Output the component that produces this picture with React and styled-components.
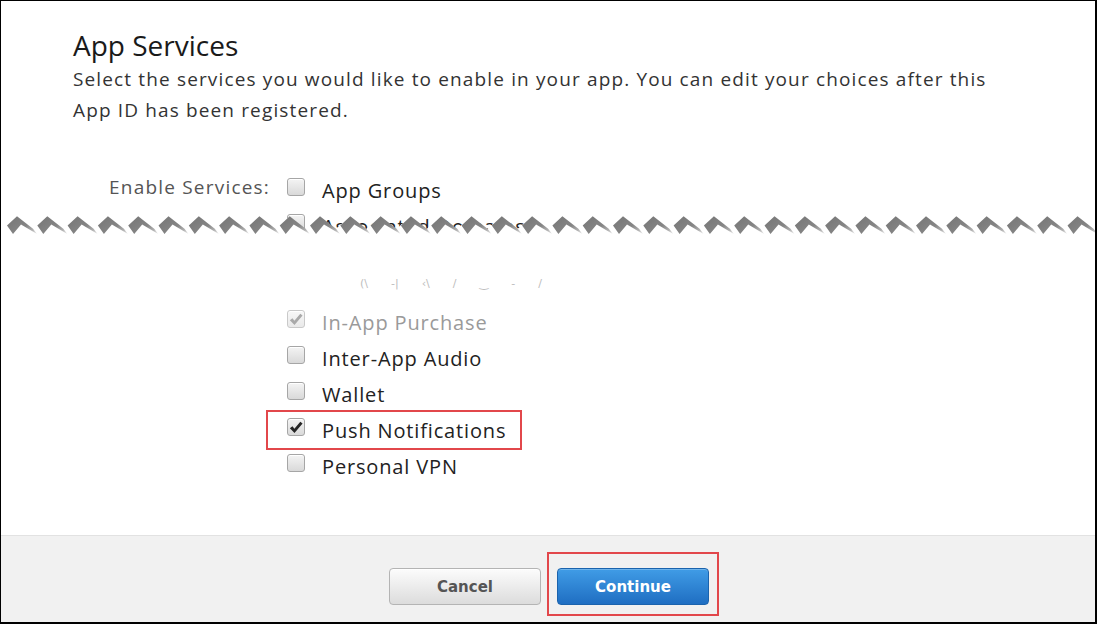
import React from 'react'
import styled, { createGlobalStyle } from 'styled-components'

const GlobalStyle = createGlobalStyle`
    html, body {
        margin: 0;
        padding: 0;
        background: #fff;
    }
`

const Frame = styled.div`
    width: 1097px;
    height: 624px;
    box-sizing: border-box;
    border: 1px solid #000;
    border-right-width: 2px;
    border-bottom-width: 2px;
    display: flex;
    flex-direction: column;
    overflow: hidden;
    background: #fff;
    font-family: "Open Sans", "DejaVu Sans", sans-serif;
`

const Content = styled.div`
    flex: 1;
    padding: 27px 72px 0;
`

const Title = styled.h2`
    margin: 0;
    font-size: 28px;
    line-height: 34px;
    font-weight: 400;
    color: #1a1a1a;
`

const Intro = styled.p`
    margin: 2px 0 0;
    max-width: 945px;
    font-size: 19px;
    line-height: 31px;
    letter-spacing: 1.14px;
    color: #333;
`

const Form = styled.div`
    margin-top: 46px;
`

const FieldRow = styled.div`
    display: flex;
    align-items: flex-start;
`

const Label = styled.div`
    width: 197px;
    margin-right: 17px;
    height: 36px;
    line-height: 30px;
    text-align: right;
    font-size: 19px;
    letter-spacing: 1.2px;
    color: #555;
    flex-shrink: 0;
    white-space: nowrap;
`

const List = styled.div`
    display: flex;
    flex-direction: column;
`

const Row = styled.div`
    display: flex;
    align-items: center;
    gap: 17px;
    height: 36px;
    font-size: 20px;
    letter-spacing: 0.85px;
    color: ${p => (p.disabled ? '#9a9a9a' : '#222')};
    white-space: nowrap;
`

const Highlight = styled.div`
    align-self: flex-start;
    margin: -2px 0 -2px -21px;
    padding: 0 14px 0 19px;
    border: 2px solid #e2474b;
`

const Box = styled.span`
    width: 18px;
    height: 18px;
    box-sizing: border-box;
    margin-top: -6px;
    border: 1px solid ${p => (p.disabled ? '#c9c9c9' : '#a6a6a6')};
    border-radius: 3px;
    background: ${p => (p.disabled ? 'linear-gradient(#f8f8f8, #e9e9e9)' : 'linear-gradient(#f4f4f4, #d9d9d9)')};
    box-shadow: inset 0 1px 0 #fff;
    display: flex;
    align-items: center;
    justify-content: center;
    flex-shrink: 0;
`

const Torn = styled.div`
    position: relative;
    margin: 0 -72px;
    padding-left: 72px;
    height: 96px;
    overflow: hidden;
`

const TearOverlay = styled.svg`
    position: absolute;
    top: 0;
    left: 0;
    width: 1094px;
    height: 40px;
    pointer-events: none;
`

const Remnant = styled.div`
    display: flex;
    gap: 23px;
    margin: 34px 0 0 73px;
    font-family: "DejaVu Sans", sans-serif;
    font-size: 11px;
    line-height: 12px;
    color: #bdbdbd;
`

const Footer = styled.div`
    flex-shrink: 0;
    height: 87px;
    box-sizing: border-box;
    background: #f1f1f1;
    border-top: 1px solid #e2e2e2;
    display: flex;
    justify-content: center;
    align-items: flex-start;
    gap: 6px;
    padding: 16px 0 0 12px;
`

const Button = styled.button`
    width: 152px;
    height: 37px;
    box-sizing: border-box;
    border-radius: 4px;
    font-family: "DejaVu Sans", sans-serif;
    font-weight: bold;
    font-size: 15px;
    cursor: pointer;
    margin-top: ${p => (p.primary ? '0' : '16px')};
    color: ${p => (p.primary ? '#fff' : '#555')};
    border: 1px solid ${p => (p.primary ? '#1b63ad' : '#b4b4b4')};
    background: ${p => (p.primary ? 'linear-gradient(#409ce6, #1f6ec2)' : 'linear-gradient(#fcfcfc, #dcdcdc)')};
    box-shadow: inset 0 1px 0 ${p => (p.primary ? 'rgba(255,255,255,0.25)' : '#fff')};
`

const ButtonMark = styled.div`
    padding: 14px 8px 9px;
    border: 2px solid #e2474b;
`

function Check({ checked, disabled }) {
    const c = disabled ? '#a9a9a9' : '#262626'
    return (
        <Box disabled={disabled}>
            {checked &&
                <svg width="14" height="13" viewBox="0 0 13 12">
                    <path d="M0.8 6.8 L3.2 4.8 L5 7.2 L10.5 0.6 L12.6 2.2 L5.1 11.2 Z" fill={c} />
                </svg>
            }
        </Box>
    )
}

function Tear() {
    const teeth = []
    for (let k = 0; k < 37; k++) teeth.push(16 + 30.3 * k)

    // white paper under the tear line
    let edge = 'M0 40 L0 20 '
    teeth.forEach(px => {
        edge += `L${px - 15.15} 21.5 L${px} 8.2 `
    })
    edge += 'L1094 21.5 L1094 40 Z'

    return (
        <TearOverlay viewBox="0 0 1094 40">
            <defs>
                <linearGradient id="tooth" x1="0" y1="0.2" x2="1" y2="1">
                    <stop offset="0" stopColor="#777" />
                    <stop offset="0.55" stopColor="#858585" />
                    <stop offset="0.8" stopColor="#b0b0b0" />
                    <stop offset="1" stopColor="#f2f2f2" />
                </linearGradient>
                <filter id="soft" x="-10%" y="-10%" width="120%" height="120%">
                    <feGaussianBlur stdDeviation="0.45" />
                </filter>
            </defs>
            <path d={edge} fill="#fff" />
            <g filter="url(#soft)">
                {teeth.map(px =>
                    <polygon key={px} fill="url(#tooth)"
                        points={`${px - 10},17.5 ${px},8.2 ${px + 16},20.8 ${px + 20},26 ${px + 4},16.5 ${px - 4},26`} />
                )}
            </g>
        </TearOverlay>
    )
}

export default function App() {
    const lower = [
        { name: 'In-App Purchase', checked: true, disabled: true },
        { name: 'Inter-App Audio' },
        { name: 'Wallet' },
        { name: 'Push Notifications', checked: true, marked: true },
        { name: 'Personal VPN' },
    ]

    return (
        <>
            <GlobalStyle />
            <Frame>
                <Content>
                    <Title>App Services</Title>
                    <Intro>
                        Select the services you would like to enable in your app. You can edit your choices after this App ID has been registered.
                    </Intro>

                    <Form>
                        <FieldRow>
                            <Label>Enable Services:</Label>
                            <List>
                                <Row><Check />App Groups</Row>
                            </List>
                        </FieldRow>

                        <Torn>
                            <FieldRow>
                                <Label />
                                <List>
                                    <Row><Check />Associated Domains</Row>
                                    <Remnant>
                                        <span>(\</span><span>-|</span><span>‹\</span><span>/</span><span>‿</span><span>-</span><span>/</span>
                                    </Remnant>
                                </List>
                            </FieldRow>
                            <Tear />
                        </Torn>

                        <FieldRow>
                            <Label />
                            <List>
                                {lower.map(s => {
                                    const row = (
                                        <Row key={s.name} disabled={s.disabled}>
                                            <Check checked={s.checked} disabled={s.disabled} />
                                            {s.name}
                                        </Row>
                                    )
                                    return s.marked ? <Highlight key={s.name}>{row}</Highlight> : row
                                })}
                            </List>
                        </FieldRow>
                    </Form>
                </Content>

                <Footer>
                    <Button>Cancel</Button>
                    <ButtonMark>
                        <Button primary>Continue</Button>
                    </ButtonMark>
                </Footer>
            </Frame>
        </>
    )
}
